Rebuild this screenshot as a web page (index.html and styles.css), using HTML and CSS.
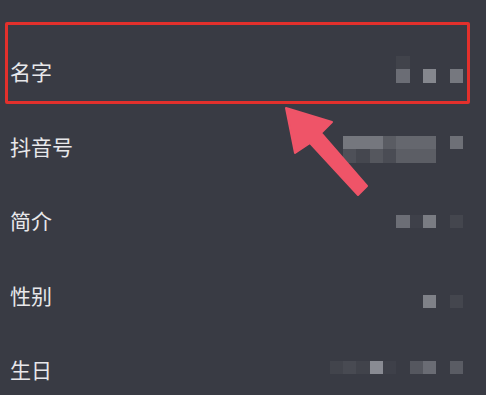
FILE: index.html
```html
<!DOCTYPE html>
<html lang="zh-CN">
<head>
<meta charset="utf-8">
<title>编辑资料</title>
<link rel="stylesheet" href="styles.css">
</head>
<body>
<div class="screen">
  <ul class="list">
    <li class="row">
      <span class="label">名字</span>
      <div class="mosaic m1">
        <span></span><span></span><span></span><span></span><span></span><span class="s-f1"></span><span></span><span></span><span></span><span></span>
        <span></span><span></span><span></span><span></span><span></span><span class="s-a"></span><span></span><span class="s-c"></span><span></span><span class="s-b"></span>
      </div>
    </li>
    <li class="row">
      <span class="label">抖音号</span>
      <div class="mosaic m2">
        <span></span><span class="s-d"></span><span class="s-d"></span><span class="s-d"></span><span class="s-e"></span><span class="s-g"></span><span class="s-g"></span><span class="s-g"></span><span></span><span class="s-h"></span>
        <span></span><span class="s-i"></span><span class="s-j"></span><span class="s-k"></span><span class="s-l"></span><span class="s-m"></span><span class="s-m"></span><span class="s-m"></span><span></span><span></span>
      </div>
    </li>
    <li class="row">
      <span class="label">简介</span>
      <div class="mosaic m3">
        <span></span><span></span><span></span><span></span><span></span><span class="s-a2"></span><span class="s-f2"></span><span class="s-c2"></span><span></span><span class="s-f3"></span>
      </div>
    </li>
    <li class="row">
      <span class="label">性别</span>
      <div class="mosaic m4">
        <span></span><span></span><span></span><span></span><span></span><span></span><span></span><span class="s-c3"></span><span></span><span class="s-f3"></span>
      </div>
    </li>
    <li class="row">
      <span class="label">生日</span>
      <div class="mosaic m5">
        <span class="s-n"></span><span class="s-o"></span><span class="s-n2"></span><span class="s-p"></span><span class="s-f2"></span><span></span><span class="s-q"></span><span class="s-r"></span><span></span><span class="s-s"></span>
      </div>
    </li>
  </ul>

  <div class="highlight"></div>

  <svg class="arrow" width="92" height="96" viewBox="280 104 92 96" aria-hidden="true">
    <polygon points="286,108 332,122 321,133 367,186 358,195 310,143 295,153" fill="#ef5468" stroke="#ef5468" stroke-width="2" stroke-linejoin="round"/>
  </svg>
</div>
</body>
</html>
```

FILE: styles.css
```css
html, body {
  margin: 0;
  padding: 0;
}

body {
  width: 486px;
  height: 395px;
  overflow: hidden;
  background: #393b44;
  font-family: "Noto Sans CJK SC", "Noto Sans", sans-serif;
}

.screen {
  position: relative;
  width: 486px;
  height: 395px;
}

.list {
  list-style: none;
  margin: 0;
  padding: 35px 0 0 0;
}

.row {
  height: 74.5px;
  display: flex;
  align-items: flex-start;
  justify-content: space-between;
  padding: 0 23px 0 10px;
  box-sizing: border-box;
}

.label {
  align-self: center;
  margin-top: -2px;
  font-size: 21px;
  line-height: 24px;
  color: #e8e8eb;
  letter-spacing: 0;
}

.mosaic {
  display: grid;
  grid-template-columns: repeat(10, 13.33px);
  grid-auto-rows: 13.33px;
  filter: blur(0.4px);
}

.m1 { margin-top: 21px; }
.m2 { margin-top: 26.5px; }
.m3 { margin-top: 31px; }
.m4 { margin-top: 36.5px; }
.m5 { margin-top: 27.5px; }

.s-a  { background: #6b6d75; }
.s-b  { background: #76787f; }
.s-c  { background: #85878e; }
.s-f1 { background: #41434b; }
.s-d  { background: #75777e; }
.s-e  { background: #5a5c63; }
.s-g  { background: #65676e; }
.s-h  { background: #6e7077; }
.s-i  { background: #4e5058; }
.s-j  { background: #45474f; }
.s-k  { background: #55575e; }
.s-l  { background: #4a4c54; }
.s-m  { background: #5c5e65; }
.s-a2 { background: #6c6e76; }
.s-c2 { background: #7a7c83; }
.s-f2 { background: #3e4049; }
.s-f3 { background: #44464e; }
.s-c3 { background: #7f8188; }
.s-n  { background: #42444c; }
.s-n2 { background: #41434b; }
.s-o  { background: #484a52; }
.s-p  { background: #898b93; }
.s-q  { background: #55575f; }
.s-r  { background: #6a6c74; }
.s-s  { background: #5a5c64; }

.highlight {
  position: absolute;
  left: 5px;
  top: 22px;
  width: 465px;
  height: 82px;
  box-sizing: border-box;
  border: 3px solid #e3302c;
  border-radius: 2px;
}

.arrow {
  position: absolute;
  left: 280px;
  top: 104px;
}
```
